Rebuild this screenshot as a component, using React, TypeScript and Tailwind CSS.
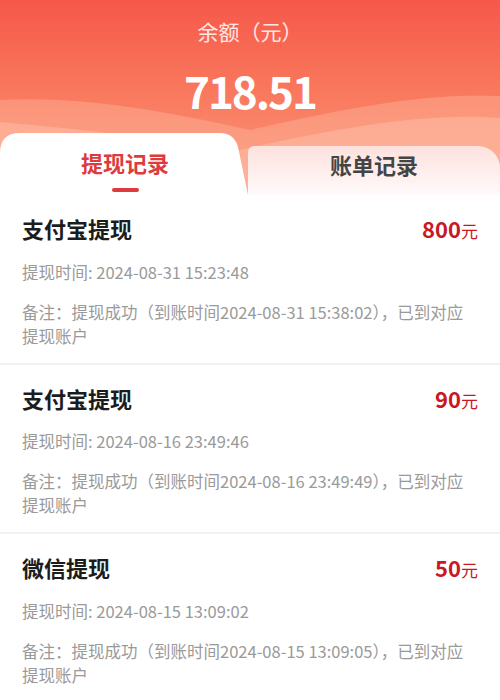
import React from "react";

// ============================================================================
// Wallet — withdrawal records
// ============================================================================

interface RecordItem {
  title: string;
  amount: string;
  time: string;
  arrive: string;
}

const records: RecordItem[] = [
  {
    title: "支付宝提现",
    amount: "800",
    time: "2024-08-31 15:23:48",
    arrive: "2024-08-31 15:38:02",
  },
  {
    title: "支付宝提现",
    amount: "90",
    time: "2024-08-16 23:49:46",
    arrive: "2024-08-16 23:49:49",
  },
  {
    title: "微信提现",
    amount: "50",
    time: "2024-08-15 13:09:02",
    arrive: "2024-08-15 13:09:05",
  },
];

const font = {
  fontFamily: '"Noto Sans CJK SC", "Noto Sans", Roboto, sans-serif',
};

function Header() {
  return (
    <div className="relative h-[195px] overflow-hidden bg-gradient-to-b from-[#f65749] via-[#f97a5f] to-[#fb9a7e]">
      {/* waves */}
      <svg
        className="absolute inset-0 h-full w-full"
        viewBox="0 0 500 195"
        preserveAspectRatio="none"
      >
        <path
          d="M0 100 C 80 96, 160 110, 250 130 C 330 112, 420 92, 500 96 L500 195 L0 195 Z"
          fill="#fdb39a"
          opacity="0.45"
        />
        <path
          d="M0 122 C 90 130, 170 140, 240 150 C 330 130, 420 112, 500 118 L500 195 L0 195 Z"
          fill="#fdbfa8"
          opacity="0.5"
        />
      </svg>

      <div className="relative flex flex-col items-center pt-[16px]">
        <p className="text-[21px] leading-[30px] text-white/85">余额（元）</p>
        <p className="mt-[19px] text-[44px] font-bold leading-[50px] tracking-[-2px] text-white">
          718.51
        </p>
      </div>

      {/* tabs */}
      <div className="absolute bottom-0 left-0 right-0 flex h-[62px]">
        <div className="relative flex w-1/2 flex-col items-center justify-center">
          <svg
            className="absolute inset-0 h-full w-[248px]"
            viewBox="0 0 248 62"
            preserveAspectRatio="none"
          >
            <path
              d="M0 20 Q0 0 20 0 L220 0 Q234 0 238 14 L248 62 L0 62 Z"
              fill="#ffffff"
            />
          </svg>
          <span className="relative mt-[10px] text-[22px] font-bold leading-[30px] text-[#dd3b3e]">
            提现记录
          </span>
          <span className="relative mt-[11px] h-[4px] w-[27px] rounded-full bg-[#dd3b3e]" />
        </div>
        <div className="ml-[-2px] mt-[13px] flex flex-1 items-center justify-center rounded-tl-[6px] rounded-tr-[22px] bg-gradient-to-b from-[#fde1de] to-[#fffafa]">
          <span className="mt-[-14px] text-[22px] font-bold leading-[30px] text-[#444]">
            账单记录
          </span>
        </div>
      </div>
    </div>
  );
}

function RecordRow({ item }: { item: RecordItem }) {
  const timeText = `提现时间: ${item.time}`;
  const noteText = `备注：提现成功（到账时间${item.arrive}），已到对应提现账户`;
  return (
    <div className="border-b-[2px] border-[#f1f1f1] px-[22px] pb-[15px] pt-[18px]">
      <div className="flex items-center justify-between">
        <span className="text-[22px] font-bold leading-[30px] text-[#1c1c1c]">
          {item.title}
        </span>
        <span className="flex items-baseline text-[#c9181f]">
          <span className="text-[22px] font-bold leading-[30px]">
            {item.amount}
          </span>
          <span className="text-[17px]">元</span>
        </span>
      </div>
      <p className="mt-[16px] text-[16.5px] leading-[24px] text-[#9a9a9a]">
        {timeText}
      </p>
      <p className="mt-[16px] text-[16.5px] leading-[24px] text-[#9a9a9a]">
        {noteText}
      </p>
    </div>
  );
}

export default function App() {
  return (
    <div className="min-h-[700px] w-[500px] bg-white" style={font}>
      <Header />
      <div>
        {records.map((r, i) => (
          <RecordRow key={i} item={r} />
        ))}
      </div>
    </div>
  );
}
